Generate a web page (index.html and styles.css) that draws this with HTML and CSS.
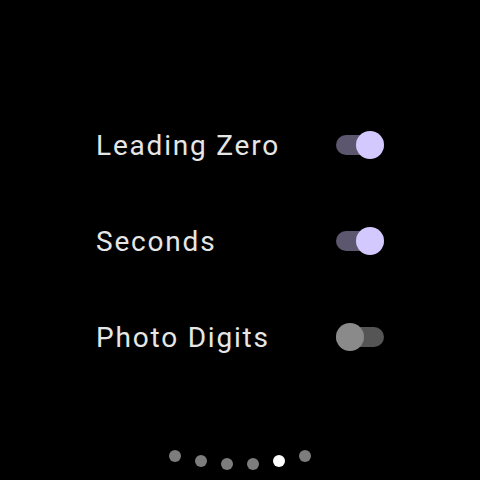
FILE: index.html
```html
<!DOCTYPE html>
<html lang="en">
<head>
  <meta charset="UTF-8" />
  <title>Watch Face Settings</title>
  <link rel="stylesheet" href="styles.css">
</head>
<body>
  <div class="screen">
    <div class="settings">
      <div class="setting-row">
        <span class="label">Leading Zero</span>
        <div class="toggle on"><span class="thumb"></span></div>
      </div>
      <div class="setting-row">
        <span class="label">Seconds</span>
        <div class="toggle on"><span class="thumb"></span></div>
      </div>
      <div class="setting-row">
        <span class="label">Photo Digits</span>
        <div class="toggle"><span class="thumb"></span></div>
      </div>
    </div>

    <div class="pager">
      <span class="dot d1"></span>
      <span class="dot d2"></span>
      <span class="dot d3"></span>
      <span class="dot d3"></span>
      <span class="dot d2 active"></span>
      <span class="dot d1"></span>
    </div>
  </div>
</body>
</html>
```

FILE: styles.css
```css
body {
  margin: 0;
  background: #000000;
  font-family: Roboto, "Noto Sans", Arial, sans-serif;
}

.screen {
  width: 480px;
  height: 480px;
  overflow: hidden;
}

.settings {
  display: flex;
  flex-direction: column;
  gap: 48px;
  padding: 121px 96px 0;
}

.setting-row {
  height: 48px;
  display: flex;
  align-items: center;
  justify-content: space-between;
}

.label {
  color: #e6e6e6;
  font-size: 28px;
  letter-spacing: 1.8px;
}

.toggle {
  position: relative;
  width: 48px;
  height: 20px;
  border-radius: 10px;
  background-color: #555555;
}

.toggle .thumb {
  position: absolute;
  top: -4px;
  left: 0;
  width: 28px;
  height: 28px;
  border-radius: 50%;
  background-color: #8a8a8a;
}

.toggle.on {
  background-color: #5c566e;
}

.toggle.on .thumb {
  left: 20px;
  background-color: #d3c9ff;
}

.pager {
  display: flex;
  justify-content: center;
  align-items: flex-start;
  gap: 14px;
  margin-top: 89px;
}

.dot {
  width: 12px;
  height: 12px;
  border-radius: 50%;
  background-color: #7d7d7d;
}

.dot.d2 {
  margin-top: 5px;
}

.dot.d3 {
  margin-top: 8px;
}

.dot.active {
  background-color: #ffffff;
}
```
